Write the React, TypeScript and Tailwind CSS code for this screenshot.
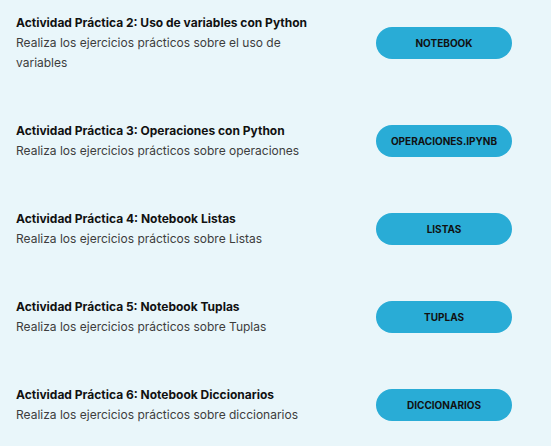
const items = [
  {
    title: 'Actividad Práctica 2: Uso de variables con Python',
    desc: 'Realiza los ejercicios prácticos sobre el uso de variables',
    label: 'NOTEBOOK',
  },
  {
    title: 'Actividad Práctica 3: Operaciones con Python',
    desc: 'Realiza los ejercicios prácticos sobre operaciones',
    label: 'OPERACIONES.IPYNB',
  },
  {
    title: 'Actividad Práctica 4: Notebook Listas',
    desc: 'Realiza los ejercicios prácticos sobre Listas',
    label: 'LISTAS',
  },
  {
    title: 'Actividad Práctica 5: Notebook Tuplas',
    desc: 'Realiza los ejercicios prácticos sobre Tuplas',
    label: 'TUPLAS',
  },
  {
    title: 'Actividad Práctica 6: Notebook Diccionarios',
    desc: 'Realiza los ejercicios prácticos sobre diccionarios',
    label: 'DICCIONARIOS',
  },
];

export default function App() {
  return (
    <div
      className="min-h-[446px] w-[551px] bg-[#e9f6fa] pl-4 pt-[13px] flex flex-col gap-12"
      style={{ fontFamily: 'Inter, "Liberation Sans", sans-serif' }}
    >
      {items.map((item) => (
        <div key={item.label} className="flex items-center">
          <div className="w-[312px] shrink-0">
            <h3 className="text-[12px] leading-5 font-bold text-[#111]">
              {item.title}
            </h3>
            <p className="text-[12px] leading-5 text-[#3d3d3d]">{item.desc}</p>
          </div>
          <div className="ml-12">
            <button className="w-[136px] h-8 rounded-full bg-[#29acd6] text-[10px] font-bold text-[#111]">
              {item.label}
            </button>
          </div>
        </div>
      ))}
    </div>
  );
}
